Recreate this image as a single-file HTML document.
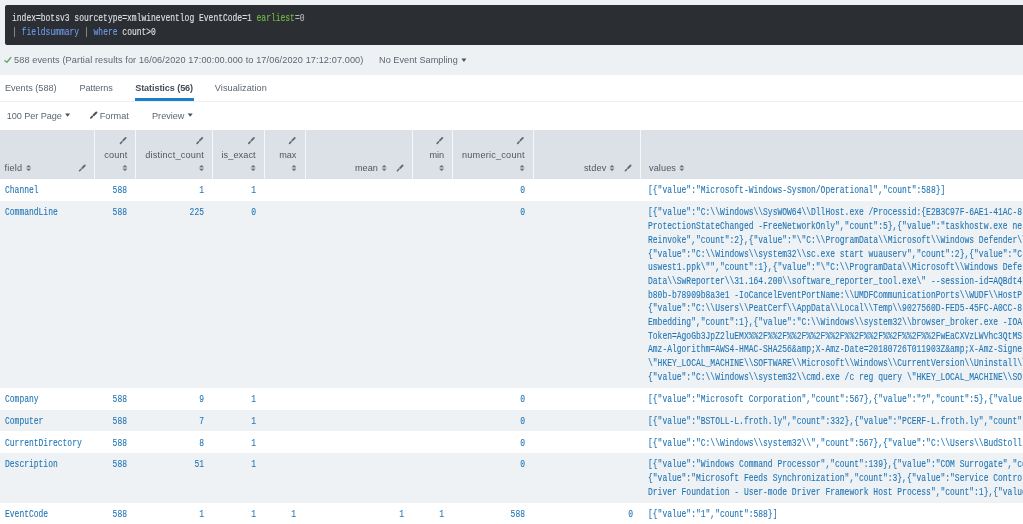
<!DOCTYPE html>
<html><head><meta charset="utf-8"><style>
html,body{margin:0;padding:0}
body{width:1023px;height:524px;overflow:hidden;position:relative;background:#eef1f4;font-family:"Liberation Sans", sans-serif}
#root{position:absolute;left:0;top:0;width:1023px;height:524px;will-change:transform}
.t{position:absolute;white-space:pre;font-family:"Liberation Sans", sans-serif;line-height:12px;-webkit-text-stroke:0.0px currentColor}
.m{position:absolute;white-space:pre;font-family:"Liberation Mono", monospace;font-size:10.0px;line-height:13.7px;transform:scaleX(0.799);-webkit-text-stroke:0.1px currentColor}
</style></head><body><div id="root">
<div style="position:absolute;left:5.3px;top:5.3px;width:1030px;height:39.6px;background:#2b2f33;border-radius:2px"></div>
<div class="m" style="left:11.50px;transform-origin:0 0;top:12.24px;color:#dfe2e5;">index=botsv3 sourcetype=xmlwineventlog EventCode=1 <span style="color:#78bd48">earliest</span><span style="color:#b4b8bc">=0</span></div>
<div class="m" style="left:11.50px;transform-origin:0 0;top:25.94px;color:#dfe2e5;"><span style="color:#a4a9ae">|</span> <span style="color:#6f9df0">fieldsummary</span> <span style="color:#a4a9ae">|</span> <span style="color:#6f9df0">where</span> count&gt;0</div>
<div class="t" style="left:14.00px;top:53.83px;font-size:9.14px;color:#5c6670;font-weight:400;letter-spacing:0.115px;">588 events (Partial results for 16/06/2020 17:00:00.000 to 17/06/2020 17:12:07.000)</div>
<div class="t" style="left:379.00px;top:53.83px;font-size:9.14px;color:#5c6670;font-weight:400;letter-spacing:0.04px;">No Event Sampling</div>
<div style="position:absolute;left:0;top:74.5px;width:1023px;height:450px;background:#fff"></div>
<div style="position:absolute;left:0;top:100.8px;width:1023px;height:1.2px;background:#edeff2"></div>
<div class="t" style="left:4.90px;top:81.83px;font-size:9.14px;color:#5c6670;font-weight:400;">Events (588)</div>
<div class="t" style="left:79.40px;top:81.83px;font-size:9.14px;color:#5c6670;font-weight:400;letter-spacing:-0.07px;">Patterns</div>
<div class="t" style="left:135.20px;top:81.83px;font-size:9.14px;color:#444d56;font-weight:700;letter-spacing:-0.1px;">Statistics (56)</div>
<div class="t" style="left:214.80px;top:81.83px;font-size:9.14px;color:#5c6670;font-weight:400;letter-spacing:0.07px;">Visualization</div>
<div style="position:absolute;left:134.9px;top:98.3px;width:59px;height:2.6px;background:#1b80c8"></div>
<div class="t" style="left:6.80px;top:109.93px;font-size:9.14px;color:#5c6670;font-weight:400;letter-spacing:-0.07px;">100 Per Page</div>
<div class="t" style="left:99.70px;top:109.93px;font-size:9.14px;color:#5c6670;font-weight:400;letter-spacing:0.05px;">Format</div>
<div class="t" style="left:152.00px;top:109.93px;font-size:9.14px;color:#5c6670;font-weight:400;">Preview</div>
<div style="position:absolute;left:0;top:130px;width:1023px;height:49.19999999999999px;background:#dce1e8"></div>
<div class="m" style="left:4.60px;transform-origin:0 0;top:184.34px;color:#1f74b4;">Channel</div>
<div class="m" style="right:895.50px;transform-origin:100% 0;top:184.34px;color:#1f74b4;">588</div>
<div class="m" style="right:818.70px;transform-origin:100% 0;top:184.34px;color:#1f74b4;">1</div>
<div class="m" style="right:766.50px;transform-origin:100% 0;top:184.34px;color:#1f74b4;">1</div>
<div class="m" style="right:498.20px;transform-origin:100% 0;top:184.34px;color:#1f74b4;">0</div>
<div class="m" style="left:648.10px;transform-origin:0 0;top:184.34px;color:#1f74b4;">[{&quot;value&quot;:&quot;Microsoft-Windows-Sysmon/Operational&quot;,&quot;count&quot;:588}]</div>
<div style="position:absolute;left:0;top:201.3px;width:1023px;height:186.30px;background:#eff2f5"></div>
<div class="m" style="left:4.60px;transform-origin:0 0;top:206.44px;color:#1f74b4;">CommandLine</div>
<div class="m" style="right:895.50px;transform-origin:100% 0;top:206.44px;color:#1f74b4;">588</div>
<div class="m" style="right:818.70px;transform-origin:100% 0;top:206.44px;color:#1f74b4;">225</div>
<div class="m" style="right:766.50px;transform-origin:100% 0;top:206.44px;color:#1f74b4;">0</div>
<div class="m" style="right:498.20px;transform-origin:100% 0;top:206.44px;color:#1f74b4;">0</div>
<div class="m" style="left:648.10px;transform-origin:0 0;top:206.44px;color:#1f74b4;">[{&quot;value&quot;:&quot;C:\\Windows\\SysWOW64\\DllHost.exe /Processid:{E2B3C97F-6AE1-41AC-8</div>
<div class="m" style="left:648.10px;transform-origin:0 0;top:220.14px;color:#1f74b4;">ProtectionStateChanged -FreeNetworkOnly&quot;,&quot;count&quot;:5},{&quot;value&quot;:&quot;taskhostw.exe ne</div>
<div class="m" style="left:648.10px;transform-origin:0 0;top:233.84px;color:#1f74b4;">Reinvoke&quot;,&quot;count&quot;:2},{&quot;value&quot;:&quot;\&quot;C:\\ProgramData\\Microsoft\\Windows Defender\\</div>
<div class="m" style="left:648.10px;transform-origin:0 0;top:247.54px;color:#1f74b4;">{&quot;value&quot;:&quot;C:\\Windows\\system32\\sc.exe start wuauserv&quot;,&quot;count&quot;:2},{&quot;value&quot;:&quot;C</div>
<div class="m" style="left:648.10px;transform-origin:0 0;top:261.24px;color:#1f74b4;">uswest1.ppk\&quot;&quot;,&quot;count&quot;:1},{&quot;value&quot;:&quot;\&quot;C:\\ProgramData\\Microsoft\\Windows Defe</div>
<div class="m" style="left:648.10px;transform-origin:0 0;top:274.94px;color:#1f74b4;">Data\\SwReporter\\31.164.200\\software_reporter_tool.exe\&quot; --session-id=AQBdt4</div>
<div class="m" style="left:648.10px;transform-origin:0 0;top:288.64px;color:#1f74b4;">b80b-b78909b8a3e1 -IoCancelEventPortName:\\UMDFCommunicationPorts\\WUDF\\HostP</div>
<div class="m" style="left:648.10px;transform-origin:0 0;top:302.34px;color:#1f74b4;">{&quot;value&quot;:&quot;C:\\Users\\PeatCerf\\AppData\\Local\\Temp\\9027560D-FED5-45FC-A0CC-8</div>
<div class="m" style="left:648.10px;transform-origin:0 0;top:316.04px;color:#1f74b4;">Embedding&quot;,&quot;count&quot;:1},{&quot;value&quot;:&quot;C:\\Windows\\system32\\browser_broker.exe -IOA</div>
<div class="m" style="left:648.10px;transform-origin:0 0;top:329.74px;color:#1f74b4;">Token=AgoGb3JpZ2luEMX%%2F%%2F%%2F%%2F%%2F%%2F%%2F%%2F%%2F%%2FwEaCXVzLWVhc3QtMS</div>
<div class="m" style="left:648.10px;transform-origin:0 0;top:343.44px;color:#1f74b4;">Amz-Algorithm=AWS4-HMAC-SHA256&amp;amp;X-Amz-Date=20180726T011903Z&amp;amp;X-Amz-Signe</div>
<div class="m" style="left:648.10px;transform-origin:0 0;top:357.14px;color:#1f74b4;">\&quot;HKEY_LOCAL_MACHINE\\SOFTWARE\\Microsoft\\Windows\\CurrentVersion\\Uninstall\\</div>
<div class="m" style="left:648.10px;transform-origin:0 0;top:370.84px;color:#1f74b4;">{&quot;value&quot;:&quot;C:\\Windows\\system32\\cmd.exe /c reg query \&quot;HKEY_LOCAL_MACHINE\\SO</div>
<div class="m" style="left:4.60px;transform-origin:0 0;top:392.74px;color:#1f74b4;">Company</div>
<div class="m" style="right:895.50px;transform-origin:100% 0;top:392.74px;color:#1f74b4;">588</div>
<div class="m" style="right:818.70px;transform-origin:100% 0;top:392.74px;color:#1f74b4;">9</div>
<div class="m" style="right:766.50px;transform-origin:100% 0;top:392.74px;color:#1f74b4;">1</div>
<div class="m" style="right:498.20px;transform-origin:100% 0;top:392.74px;color:#1f74b4;">0</div>
<div class="m" style="left:648.10px;transform-origin:0 0;top:392.74px;color:#1f74b4;">[{&quot;value&quot;:&quot;Microsoft Corporation&quot;,&quot;count&quot;:567},{&quot;value&quot;:&quot;?&quot;,&quot;count&quot;:5},{&quot;value&quot;</div>
<div style="position:absolute;left:0;top:409.5px;width:1023px;height:21.90px;background:#eff2f5"></div>
<div class="m" style="left:4.60px;transform-origin:0 0;top:414.64px;color:#1f74b4;">Computer</div>
<div class="m" style="right:895.50px;transform-origin:100% 0;top:414.64px;color:#1f74b4;">588</div>
<div class="m" style="right:818.70px;transform-origin:100% 0;top:414.64px;color:#1f74b4;">7</div>
<div class="m" style="right:766.50px;transform-origin:100% 0;top:414.64px;color:#1f74b4;">1</div>
<div class="m" style="right:498.20px;transform-origin:100% 0;top:414.64px;color:#1f74b4;">0</div>
<div class="m" style="left:648.10px;transform-origin:0 0;top:414.64px;color:#1f74b4;">[{&quot;value&quot;:&quot;BSTOLL-L.froth.ly&quot;,&quot;count&quot;:332},{&quot;value&quot;:&quot;PCERF-L.froth.ly&quot;,&quot;count&quot;:</div>
<div class="m" style="left:4.60px;transform-origin:0 0;top:436.54px;color:#1f74b4;">CurrentDirectory</div>
<div class="m" style="right:895.50px;transform-origin:100% 0;top:436.54px;color:#1f74b4;">588</div>
<div class="m" style="right:818.70px;transform-origin:100% 0;top:436.54px;color:#1f74b4;">8</div>
<div class="m" style="right:766.50px;transform-origin:100% 0;top:436.54px;color:#1f74b4;">1</div>
<div class="m" style="right:498.20px;transform-origin:100% 0;top:436.54px;color:#1f74b4;">0</div>
<div class="m" style="left:648.10px;transform-origin:0 0;top:436.54px;color:#1f74b4;">[{&quot;value&quot;:&quot;C:\\Windows\\system32\\&quot;,&quot;count&quot;:567},{&quot;value&quot;:&quot;C:\\Users\\BudStoll</div>
<div style="position:absolute;left:0;top:453.3px;width:1023px;height:49.30px;background:#eff2f5"></div>
<div class="m" style="left:4.60px;transform-origin:0 0;top:458.44px;color:#1f74b4;">Description</div>
<div class="m" style="right:895.50px;transform-origin:100% 0;top:458.44px;color:#1f74b4;">588</div>
<div class="m" style="right:818.70px;transform-origin:100% 0;top:458.44px;color:#1f74b4;">51</div>
<div class="m" style="right:766.50px;transform-origin:100% 0;top:458.44px;color:#1f74b4;">1</div>
<div class="m" style="right:498.20px;transform-origin:100% 0;top:458.44px;color:#1f74b4;">0</div>
<div class="m" style="left:648.10px;transform-origin:0 0;top:458.44px;color:#1f74b4;">[{&quot;value&quot;:&quot;Windows Command Processor&quot;,&quot;count&quot;:139},{&quot;value&quot;:&quot;COM Surrogate&quot;,&quot;co</div>
<div class="m" style="left:648.10px;transform-origin:0 0;top:472.14px;color:#1f74b4;">{&quot;value&quot;:&quot;Microsoft Feeds Synchronization&quot;,&quot;count&quot;:3},{&quot;value&quot;:&quot;Service Control</div>
<div class="m" style="left:648.10px;transform-origin:0 0;top:485.84px;color:#1f74b4;">Driver Foundation - User-mode Driver Framework Host Process&quot;,&quot;count&quot;:1},{&quot;value</div>
<div class="m" style="left:4.60px;transform-origin:0 0;top:507.74px;color:#1f74b4;">EventCode</div>
<div class="m" style="right:895.50px;transform-origin:100% 0;top:507.74px;color:#1f74b4;">588</div>
<div class="m" style="right:818.70px;transform-origin:100% 0;top:507.74px;color:#1f74b4;">1</div>
<div class="m" style="right:766.50px;transform-origin:100% 0;top:507.74px;color:#1f74b4;">1</div>
<div class="m" style="right:726.90px;transform-origin:100% 0;top:507.74px;color:#1f74b4;">1</div>
<div class="m" style="right:618.80px;transform-origin:100% 0;top:507.74px;color:#1f74b4;">1</div>
<div class="m" style="right:579.10px;transform-origin:100% 0;top:507.74px;color:#1f74b4;">1</div>
<div class="m" style="right:498.20px;transform-origin:100% 0;top:507.74px;color:#1f74b4;">588</div>
<div class="m" style="right:390.40px;transform-origin:100% 0;top:507.74px;color:#1f74b4;">0</div>
<div class="m" style="left:648.10px;transform-origin:0 0;top:507.74px;color:#1f74b4;">[{&quot;value&quot;:&quot;1&quot;,&quot;count&quot;:588}]</div>
<div style="position:absolute;left:94px;top:130px;width:1px;height:49.19999999999999px;background:#f6f7f9"></div>
<div style="position:absolute;left:135px;top:130px;width:1px;height:49.19999999999999px;background:#f6f7f9"></div>
<div style="position:absolute;left:212px;top:130px;width:1px;height:49.19999999999999px;background:#f6f7f9"></div>
<div style="position:absolute;left:264px;top:130px;width:1px;height:49.19999999999999px;background:#f6f7f9"></div>
<div style="position:absolute;left:304.5px;top:130px;width:1px;height:49.19999999999999px;background:#f6f7f9"></div>
<div style="position:absolute;left:412px;top:130px;width:1px;height:49.19999999999999px;background:#f6f7f9"></div>
<div style="position:absolute;left:452px;top:130px;width:1px;height:49.19999999999999px;background:#f6f7f9"></div>
<div style="position:absolute;left:533px;top:130px;width:1px;height:49.19999999999999px;background:#f6f7f9"></div>
<div style="position:absolute;left:640px;top:130px;width:1px;height:49.19999999999999px;background:#f6f7f9"></div>
<div class="t" style="left:4.60px;top:162.23px;font-size:9.14px;color:#4d5761;font-weight:400;letter-spacing:0.17px;">field</div>
<div class="t" style="right:895.52px;top:148.73px;font-size:9.14px;color:#4d5761;font-weight:400;letter-spacing:0.18px;">count</div>
<div class="t" style="right:818.88px;top:148.73px;font-size:9.14px;color:#4d5761;font-weight:400;letter-spacing:0.22px;">distinct_count</div>
<div class="t" style="right:767.31px;top:148.73px;font-size:9.14px;color:#4d5761;font-weight:400;letter-spacing:0.09px;">is_exact</div>
<div class="t" style="right:726.60px;top:148.73px;font-size:9.14px;color:#4d5761;font-weight:400;">max</div>
<div class="t" style="right:579.05px;top:148.73px;font-size:9.14px;color:#4d5761;font-weight:400;letter-spacing:-0.05px;">min</div>
<div class="t" style="right:498.28px;top:148.73px;font-size:9.14px;color:#4d5761;font-weight:400;letter-spacing:0.22px;">numeric_count</div>
<div class="t" style="right:645.07px;top:162.23px;font-size:9.14px;color:#4d5761;font-weight:400;letter-spacing:0.03px;">mean</div>
<div class="t" style="right:416.42px;top:162.23px;font-size:9.14px;color:#4d5761;font-weight:400;letter-spacing:0.18px;">stdev</div>
<div class="t" style="left:649.00px;top:162.23px;font-size:9.14px;color:#4d5761;font-weight:400;letter-spacing:0.1px;">values</div>
<svg style="position:absolute;left:0;top:0" width="1023" height="524" viewBox="0 0 1023 524"><path d="M4.9 60.7 L6.9 62.3 L10.9 57.5" fill="none" stroke="#5aae5c" stroke-width="1.35" stroke-linecap="round" stroke-linejoin="round"/><path d="M461.40 58.60 L466.40 58.60 L463.90 61.90 Z" fill="#48515a"/><path d="M65.10 113.40 L70.10 113.40 L67.60 116.70 Z" fill="#48515a"/><line x1="96.36" y1="112.53" x2="93.78" y2="115.03" stroke="#4a535c" stroke-width="2.1" stroke-linecap="round"/><line x1="92.39" y1="116.37" x2="90.88" y2="117.83" stroke="#4a535c" stroke-width="1.78" stroke-linecap="round"/><path d="M187.70 113.40 L192.70 113.40 L190.20 116.70 Z" fill="#48515a"/><path d="M26.50 167.20 L28.60 165.00 L30.70 167.20 Z M26.50 168.80 L28.60 171.10 L30.70 168.80 Z" fill="#6a747e" stroke="#6a747e" stroke-width="0.3" stroke-linejoin="round"/><line x1="84.78" y1="165.52" x2="82.32" y2="167.98" stroke="#616b76" stroke-width="1.85" stroke-linecap="round"/><line x1="81.00" y1="169.30" x2="79.56" y2="170.74" stroke="#616b76" stroke-width="1.57" stroke-linecap="round"/><line x1="125.68" y1="137.93" x2="123.22" y2="140.48" stroke="#616b76" stroke-width="1.85" stroke-linecap="round"/><line x1="121.90" y1="141.84" x2="120.46" y2="143.33" stroke="#616b76" stroke-width="1.57" stroke-linecap="round"/><path d="M122.80 167.20 L124.90 165.00 L127.00 167.20 Z M122.80 168.80 L124.90 171.10 L127.00 168.80 Z" fill="#6a747e" stroke="#6a747e" stroke-width="0.3" stroke-linejoin="round"/><line x1="202.28" y1="137.93" x2="199.82" y2="140.48" stroke="#616b76" stroke-width="1.85" stroke-linecap="round"/><line x1="198.50" y1="141.84" x2="197.06" y2="143.33" stroke="#616b76" stroke-width="1.57" stroke-linecap="round"/><path d="M199.40 167.20 L201.50 165.00 L203.60 167.20 Z M199.40 168.80 L201.50 171.10 L203.60 168.80 Z" fill="#6a747e" stroke="#6a747e" stroke-width="0.3" stroke-linejoin="round"/><line x1="253.98" y1="137.93" x2="251.52" y2="140.48" stroke="#616b76" stroke-width="1.85" stroke-linecap="round"/><line x1="250.20" y1="141.84" x2="248.76" y2="143.33" stroke="#616b76" stroke-width="1.57" stroke-linecap="round"/><path d="M251.10 167.20 L253.20 165.00 L255.30 167.20 Z M251.10 168.80 L253.20 171.10 L255.30 168.80 Z" fill="#6a747e" stroke="#6a747e" stroke-width="0.3" stroke-linejoin="round"/><line x1="294.78" y1="137.93" x2="292.32" y2="140.48" stroke="#616b76" stroke-width="1.85" stroke-linecap="round"/><line x1="291.00" y1="141.84" x2="289.56" y2="143.33" stroke="#616b76" stroke-width="1.57" stroke-linecap="round"/><path d="M291.90 167.20 L294.00 165.00 L296.10 167.20 Z M291.90 168.80 L294.00 171.10 L296.10 168.80 Z" fill="#6a747e" stroke="#6a747e" stroke-width="0.3" stroke-linejoin="round"/><line x1="442.38" y1="137.93" x2="439.92" y2="140.48" stroke="#616b76" stroke-width="1.85" stroke-linecap="round"/><line x1="438.60" y1="141.84" x2="437.16" y2="143.33" stroke="#616b76" stroke-width="1.57" stroke-linecap="round"/><path d="M439.50 167.20 L441.60 165.00 L443.70 167.20 Z M439.50 168.80 L441.60 171.10 L443.70 168.80 Z" fill="#6a747e" stroke="#6a747e" stroke-width="0.3" stroke-linejoin="round"/><line x1="522.88" y1="137.93" x2="520.42" y2="140.48" stroke="#616b76" stroke-width="1.85" stroke-linecap="round"/><line x1="519.10" y1="141.84" x2="517.66" y2="143.33" stroke="#616b76" stroke-width="1.57" stroke-linecap="round"/><path d="M520.00 167.20 L522.10 165.00 L524.20 167.20 Z M520.00 168.80 L522.10 171.10 L524.20 168.80 Z" fill="#6a747e" stroke="#6a747e" stroke-width="0.3" stroke-linejoin="round"/><path d="M382.10 167.20 L384.20 165.00 L386.30 167.20 Z M382.10 168.80 L384.20 171.10 L386.30 168.80 Z" fill="#6a747e" stroke="#6a747e" stroke-width="0.3" stroke-linejoin="round"/><line x1="402.58" y1="165.52" x2="400.12" y2="167.98" stroke="#616b76" stroke-width="1.85" stroke-linecap="round"/><line x1="398.80" y1="169.30" x2="397.36" y2="170.74" stroke="#616b76" stroke-width="1.57" stroke-linecap="round"/><path d="M609.90 167.20 L612.00 165.00 L614.10 167.20 Z M609.90 168.80 L612.00 171.10 L614.10 168.80 Z" fill="#6a747e" stroke="#6a747e" stroke-width="0.3" stroke-linejoin="round"/><line x1="630.58" y1="165.52" x2="628.12" y2="167.98" stroke="#616b76" stroke-width="1.85" stroke-linecap="round"/><line x1="626.80" y1="169.30" x2="625.36" y2="170.74" stroke="#616b76" stroke-width="1.57" stroke-linecap="round"/><path d="M679.70 167.20 L681.80 165.00 L683.90 167.20 Z M679.70 168.80 L681.80 171.10 L683.90 168.80 Z" fill="#6a747e" stroke="#6a747e" stroke-width="0.3" stroke-linejoin="round"/></svg>
</div></body></html>
